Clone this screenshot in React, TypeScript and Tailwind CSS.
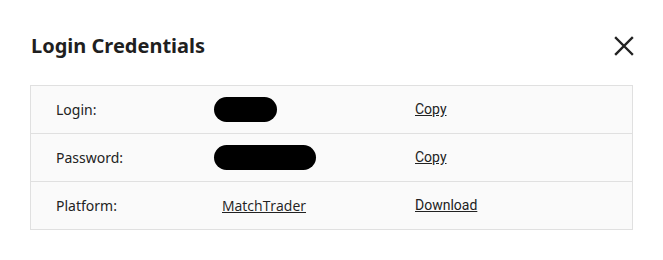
import React from "react";

function Row({ label, children, action, last }: { label: string; children: React.ReactNode; action: string; last?: boolean }) {
  return (
    <div className={`flex items-center ${last ? "h-[47px]" : "h-[48px] border-b border-[#e0e0e0]"}`}>
      <div className="w-[183px] pl-[25px] text-[14px] text-[#222] font-['Noto_Sans',sans-serif]">{label}</div>
      <div className="w-[201px] flex items-center">{children}</div>
      <a className="text-[14px] text-[#222] underline font-['Roboto',sans-serif] cursor-pointer">{action}</a>
    </div>
  );
}

export default function App() {
  return (
    <div className="w-[663px] h-[260px] bg-white pt-[30px] px-[30px]">
      <div className="flex items-center justify-between h-[32px] mb-[23px]">
        <h2 className="text-[20px] font-bold text-[#1f1f1f] font-['Noto_Sans',sans-serif] pl-[1px]">Login Credentials</h2>
        <svg width="22" height="22" viewBox="0 0 22 22" className="mr-[-2px]">
          <path d="M3 3 L19 19 M19 3 L3 19" stroke="#222" strokeWidth="2.4" strokeLinecap="square" />
        </svg>
      </div>
      <div className="border border-[#e0e0e0] bg-[#fafafa]">
        <Row label="Login:" action="Copy">
          <div className="w-[63px] h-[25px] rounded-full bg-black" />
        </Row>
        <Row label="Password:" action="Copy">
          <div className="w-[102px] h-[25px] rounded-full bg-black" />
        </Row>
        <Row label="Platform:" action="Download" last>
          <a className="ml-[8px] text-[14px] text-[#222] underline font-['Open_Sans',sans-serif]">MatchTrader</a>
        </Row>
      </div>
    </div>
  );
}
